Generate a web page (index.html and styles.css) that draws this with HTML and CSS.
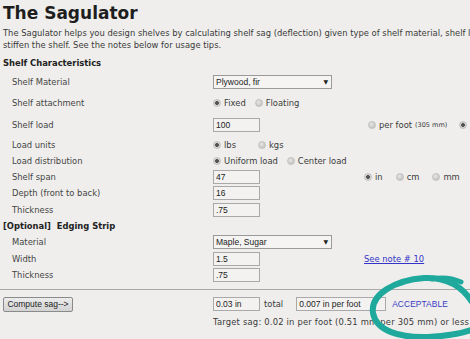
FILE: index.html
```html
<!DOCTYPE html>
<html lang="en">
<head>
  <meta charset="UTF-8" />
  <title>The Sagulator</title>
  <link rel="stylesheet" href="styles.css">
</head>
<body>
  <h1 class="title">The Sagulator</h1>
  <p class="intro">The Sagulator helps you design shelves by calculating shelf sag (deflection) given type of shelf material, shelf load, and span, and suggests ways to<br>stiffen the shelf. See the notes below for usage tips.</p>

  <!-- Shelf -->
  <div class="section">Shelf Characteristics</div>

  <div class="row mt4">
    <span class="label">Shelf Material</span>
    <span class="select"><select><option>Plywood, fir</option></select></span>
  </div>
  <div class="row mt5">
    <span class="label">Shelf attachment</span>
    <span class="opts">
      <label><input type="radio" name="att" checked>Fixed</label>
      <label><input type="radio" name="att">Floating</label>
    </span>
  </div>
  <div class="row mt6">
    <span class="label">Shelf load</span>
    <span><input class="num" type="text" value="100"></span>
    <span class="opts load-per">
      <label><input type="radio" name="per">per foot <small>(305 mm)</small></label>
      <label class="far"><input type="radio" name="per" checked>total</label>
    </span>
  </div>
  <div class="row mt4">
    <span class="label">Load units</span>
    <span class="opts">
      <label class="w39"><input type="radio" name="u" checked>lbs</label>
      <label><input type="radio" name="u">kgs</label>
    </span>
  </div>
  <div class="row">
    <span class="label">Load distribution</span>
    <span class="opts">
      <label><input type="radio" name="d" checked>Uniform load</label>
      <label><input type="radio" name="d">Center load</label>
    </span>
  </div>
  <div class="row">
    <span class="label">Shelf span</span>
    <span><input class="num" type="text" value="47"></span>
    <span class="opts units">
      <label><input type="radio" name="s" checked>in</label>
      <label><input type="radio" name="s">cm</label>
      <label><input type="radio" name="s">mm</label>
    </span>
  </div>
  <div class="row">
    <span class="label">Depth (front to back)</span>
    <span><input class="num" type="text" value="16"></span>
  </div>
  <div class="row mt1">
    <span class="label">Thickness</span>
    <span><input class="num" type="text" value=".75"></span>
  </div>

  <!-- Edging -->
  <div class="section row-h">[Optional]&nbsp; Edging Strip</div>
  <div class="row">
    <span class="label">Material</span>
    <span class="select"><select><option>Maple, Sugar</option></select></span>
  </div>
  <div class="row mt1">
    <span class="label">Width</span>
    <span><input class="num" type="text" value="1.5"></span>
    <a class="note" href="#">See note # 10</a>
  </div>
  <div class="row">
    <span class="label">Thickness</span>
    <span><input class="num" type="text" value=".75"></span>
  </div>

  <hr class="rule">

  <div class="row result">
    <span><button class="compute">Compute sag--&gt;</button></span>
    <span class="out">
      <input class="num" type="text" value="0.03 in">
      <span class="unit">total</span>
      <input class="wide" type="text" value="0.007 in per foot">
      <span class="verdict">ACCEPTABLE</span>
    </span>
  </div>
  <div class="row target">
    <span></span>
    <span>Target sag: 0.02 in per foot (0.51 mm per 305 mm) or less</span>
  </div>

  <!-- marker circle drawn over the result -->
  <svg class="circle" width="470" height="339" viewBox="0 0 470 339">
    <path d="M472 302 C462 286 446 277 424 278 C396 280 370 294 373 313 C376 331 400 338 428 337 C448 336 464 333 474 329"
          fill="none" stroke="#1fa99c" stroke-width="6" stroke-linecap="round"/>
    <path d="M432 279 C442 277 452 278 461 282" fill="none" stroke="#1fa99c" stroke-width="5" stroke-linecap="round"/>
  </svg>
</body>
</html>
```

FILE: styles.css
```css
body {
  font-family: "DejaVu Sans", Verdana, sans-serif;
  font-size: 8.4px;
  color: #3a3a3a;
  background: #efeeec;
  margin: 0;
  padding: 0 3px;
  width: 464px;
  height: 339px;
  overflow: hidden;
  position: relative;
}

.title {
  font-size: 17px;
  color: #1e1e1e;
  margin: 0;
  padding-top: 2px;
  line-height: 22px;
}

.intro {
  margin: 3px 0 0;
  line-height: 12px;
  white-space: nowrap;
}

.section {
  font-weight: bold;
  color: #222;
  margin-top: 5px;
  height: 14px;
  line-height: 14px;
}
.row-h {
  height: 16px;
  line-height: 16px;
  margin-top: 0;
}

/* Form rows */
.row {
  display: grid;
  grid-template-columns: 201px 151px 200px;
  align-items: center;
  height: 16px;
  padding-left: 9px;
  white-space: nowrap;
}
.mt1 { margin-top: 1px; }
.mt4 { margin-top: 4px; }
.mt5 { margin-top: 5px; }
.mt6 { margin-top: 6px; }

.label {
  color: #444;
}

input[type=text], select, button {
  font-family: "Liberation Sans", Arial, sans-serif;
  font-size: 8.5px;
  color: #222;
}

.num, .wide {
  width: 47px;
  height: 14px;
  box-sizing: border-box;
  border: 1px solid #a9a9a9;
  background: #f3f2f0;
  padding: 0 2px;
  margin: 0;
  display: block;
}
.wide {
  width: 90px;
}

/* Select with small arrow */
.select {
  position: relative;
  display: block;
  width: 119px;
  height: 14px;
}
.select select {
  appearance: none;
  width: 119px;
  height: 14px;
  border: 1px solid #9a9a9a;
  background: #f5f4f2;
  padding: 0 2px;
  margin: 0;
  display: block;
}
.select::after {
  content: "\25BC";
  position: absolute;
  right: 4px;
  top: 3px;
  font-size: 6px;
  color: #222;
  pointer-events: none;
}

/* Radios */
.opts {
  display: flex;
  align-items: center;
  gap: 9px;
}
.units {
  gap: 13px;
}
.load-per {
  padding-left: 4px;
}
.opts label {
  display: flex;
  align-items: center;
}
.opts input[type=radio] {
  appearance: none;
  width: 8px;
  height: 8px;
  margin: 0 3px 0 0;
  border-radius: 50%;
  background: radial-gradient(circle at 40% 35%, #e6e6e6, #b9b9b9);
  border: 1px solid #c2c2c2;
  box-sizing: border-box;
}
.opts input[type=radio]:checked {
  background: radial-gradient(circle, #555 0 1.6px, #d8d8d8 2.2px, #bbb);
}
.opts small {
  font-size: 6.5px;
  margin-left: 3px;
}
.w39 {
  width: 36px;
}
.far {
  margin-left: 3px;
}

.note {
  color: #3434c8;
  text-decoration: underline;
}

.rule {
  border: 0;
  border-top: 1px solid #a9a9a9;
  margin: 6px -3px 6px;
  width: 470px;
}

/* Result */
.result {
  padding-left: 0;
  grid-template-columns: 210px 300px;
}
.compute {
  font-size: 8.5px;
  height: 15px;
  width: 70px;
  padding: 0;
  border: 1px solid #8a8a8a;
  border-radius: 2px;
  background: linear-gradient(#ececec, #d2d2d2);
}
.out {
  display: flex;
  align-items: center;
}
.unit {
  margin: 0 13px 0 4px;
}
.verdict {
  font-family: "Liberation Sans", Arial, sans-serif;
  color: #3a3ac6;
  margin-left: 6px;
  letter-spacing: 0.1px;
}

.target {
  margin-top: 2px;
  padding-left: 0;
  grid-template-columns: 210px 300px;
  letter-spacing: 0.2px;
}

.circle {
  position: absolute;
  left: 0;
  top: 0;
  pointer-events: none;
}
```
